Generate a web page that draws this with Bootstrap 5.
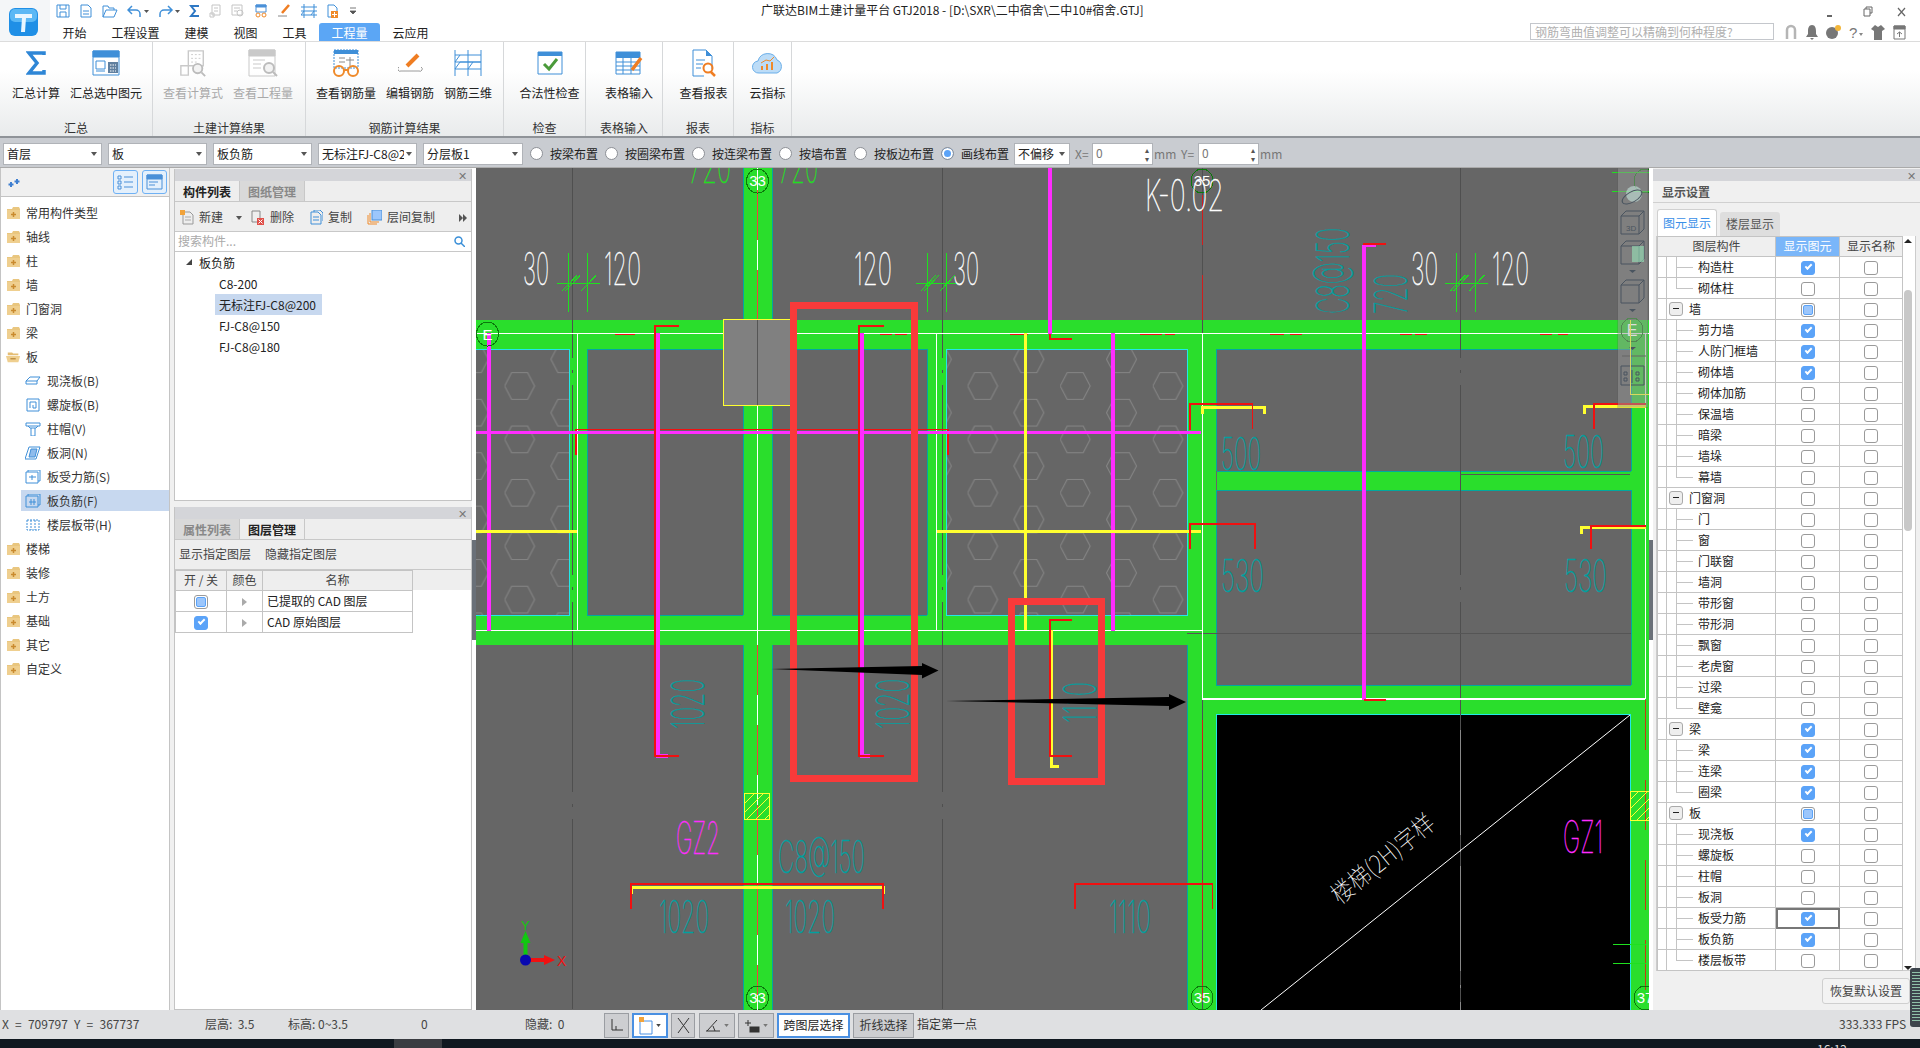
<!DOCTYPE html>
<html lang="zh-CN">
<head>
<meta charset="UTF-8" />
<title>广联达BIM土建计量平台 GTJ2018</title>
<link href="https://cdn.jsdelivr.net/npm/bootstrap@5.3.0/dist/css/bootstrap.min.css" rel="stylesheet" />
<style>
  html, body { height: 100%; overflow: hidden; }
  body { background: #f0f0f0; color: #222; font: 12px/1.2 "Noto Sans CJK SC", "Liberation Sans", sans-serif; }
  svg { display: block; }
  .app { width: 1920px; height: 1048px; position: relative; }

  /* title + tabs */
  .top-area { height: 42px; background: #fff; border-bottom: 1px solid #dcdcdc; }
  .logo-box { width: 50px; height: 41px; padding: 8px 0 0 9px; flex: none; background: #f4f6f8; }
  .qa-row { height: 23px; }
  .qa-icons { width: 711px; flex: none; padding: 0 0 2px 6px; gap: 9px; }
  .app-title { font-size: 12px; color: #222; padding-top: 3px; white-space: nowrap; }
  .win-btns { margin-left: auto; gap: 24px; padding: 1px 14px 0 0; color: #555; }
  .win-btns svg:first-child { margin-right: 5px; }
  .tab-row { height: 18px; }
  .rib-tab { padding: 0 12.5px; height: 18px; line-height: 19px; color: #222; white-space: nowrap; }
  .rib-tab.on { background: #5ba6f5; color: #fff; border-radius: 3px 3px 0 0; }
  .help-box { width: 244px; height: 17px; margin: 0 0 0 auto; padding: 0 4px; font-size: 12px; border: 1px solid #c4c7cc; border-radius: 0; color: #aaa; background: #fff; }
  .help-box::placeholder { color: #b0b0b0; }
  .top-tools { gap: 8px; width: 146px; flex: none; padding: 0 0 0 10px; }

  /* ribbon */
  .ribbon { height: 96px; background: linear-gradient(#fff 30%, #e9ebec); border-bottom: 2px solid #8f9398; }
  .rib-group { border-right: 1px solid #d6d8da; flex: none; padding: 1px 0 0 10px; position: relative; }
  .rib-btns { gap: 10px; }
  .rib-btn { display: flex; flex-direction: column; align-items: center; white-space: nowrap; color: #222; }
  .rib-btn .ico { height: 40px; display: flex; align-items: center; }
  .rib-btn span { margin-top: 3px; }
  .rib-btn.off { color: #a9a9a9; }
  .rib-name { position: absolute; left: 0; right: 0; bottom: 1px; text-align: center; color: #333; }

  /* placement bar */
  .place-bar { height: 30px; background: #c9ccd1; padding: 3px 0 0 3px; gap: 6px; white-space: nowrap; border-bottom: 1px solid #aaa; }
  .place-sel { height: 22px; padding: 0 12px 0 3px; font-size: 12px; line-height: 20px; color: #222; border: 1px solid #b0b3b8; border-radius: 0;
    background-image: url("data:image/svg+xml,%3Csvg xmlns='http://www.w3.org/2000/svg' viewBox='0 0 6 4'%3E%3Cpath d='M0 0h6L3 4z' fill='%23555'/%3E%3C/svg%3E");
    background-size: 6px 4px; background-position: right 4px center; }
  .radio-item { display: flex; align-items: center; gap: 7px; margin-left: 1px; }
  .radio-item .form-check-input { width: 13px; height: 13px; margin: 0; border: 1px solid #8d9096; background-color: #fff; flex: none; }
  .radio-item .form-check-input:checked { background-image: none; background-color: #5ba3f8; box-shadow: inset 0 0 0 2px #fff; }
  .offset-sel { width: 56px; margin-left: -1px; }
  .num-box { width: 61px; height: 22px; margin-left: -5px; background: #fff; border: 1px solid #b0b3b8; padding: 2px 3px; color: #777; position: relative; }
  .num-box::after { content: "▴\A▾"; white-space: pre; position: absolute; right: 3px; top: 1px; font-size: 8px; line-height: 9px; color: #555; }
  .muted-lb { color: #777; margin-left: -1px; width: 16px; }
  .unit-lb { color: #777; margin-left: -5px; width: 22px; }

  /* panels */
  .main-row { height: 842px; }
  .side-left { width: 170px; background: #fff; border-left: 1px solid #c4c4c4; border-right: 1px solid #c4c4c4; flex: none; }
  .side-head { height: 29px; background: #f0f0f0; border-bottom: 1px solid #c4c4c4; padding: 2px 2px 0 6px; }
  .view-btn { width: 25px; height: 24px; border: 1px solid #6fb1f4; border-radius: 3px; background: #e4f0fc; padding: 3px; margin-left: 4px; }
  .tree-list { border-radius: 0; padding-top: 4px; }
  .tree-list .list-group-item { height: 24px; padding: 0 0 0 5px; display: flex; align-items: center; gap: 5px; border: 0; background: transparent; color: #333; flex: none; }
  .tree-list .sub { padding-left: 24px; gap: 6px; }
  .tree-list .sub.on { background: linear-gradient(to right, transparent 20px, #c7d8ef 20px); background-size: 100% 21px; background-repeat: no-repeat; background-position: 0 1px; }
  .mid-col { width: 298px; margin-left: 4px; flex: none; padding-top: 1px; gap: 6px; }
  .mid-panel { background: #fff; border: 1px solid #c4c4c4; border-top: 0; }
  .pane-head { height: 12px; background: #d4d5d9; position: relative; flex: none; }
  .pane-x { position: absolute; right: 4px; top: 0; font-size: 11px; line-height: 12px; color: #777; }
  .pane-tabs { height: 21px; background: #eee; border-bottom: 1px solid #c8c8c8; flex: none; }
  .pane-tab { width: 65px; text-align: center; line-height: 21px; color: #888; background: #d9d9d9; font-weight: 700; border-right: 1px solid #c8c8c8; }
  .pane-tab.on { background: #eee; color: #222; }
  .pane-tools { height: 30px; background: #eee; border-bottom: 1px solid #c8c8c8; flex: none; padding: 2px 0 0 5px; color: #444; white-space: nowrap; }
  .pane-tools .tool { display: flex; align-items: center; gap: 5px; }
  .find-row { height: 20px; border-bottom: 1px solid #c8c8c8; padding: 0 6px 0 3px; flex: none; color: #aaa; justify-content: space-between; align-items: center; }
  .comp-row { height: 21px; line-height: 21px; padding-left: 44px; color: #222; }
  .comp-row.on { margin-left: 40px; padding-left: 4px; width: 107px; background: #c7d8ef; white-space: nowrap; }
  .comp-row.root { padding-left: 24px; position: relative; }
  .comp-row.root::before { content: ""; position: absolute; left: 11px; top: 7px; border-left: 6px solid transparent; border-bottom: 6px solid #444; }
  .layer-tools { height: 30px; background: #eee; border-bottom: 1px solid #c8c8c8; padding-left: 4px; gap: 14px; flex: none; align-items: center; color: #444; }
  .layer-tb { width: 238px; margin: 0; table-layout: fixed; border-color: #c4c4c4; font-size: 12px; }
  .layer-tb th, .layer-tb td { height: 21px; padding: 0; vertical-align: middle; text-align: center; font-weight: 400; background: transparent; color: #222; }
  .layer-tb th { height: 20px; color: #444; }
  .layer-tb td.nm { text-align: left; padding-left: 4px; }
  .layer-wrap { background: linear-gradient(#eee 20px, #fff 20px); }
  .tri { display: inline-block; border-left: 5px solid #aaa; border-top: 4px solid transparent; border-bottom: 4px solid transparent; }

  /* checks */
  .chk { display: inline-block; margin: 0; width: 14px; height: 14px; border: 1px solid #9a9a9a; border-radius: 3px; background: #fff; vertical-align: middle; position: relative; }
  .chk.yes { background: #5ba3f8; border-color: #5ba3f8; }
  .chk.yes::after { content: ""; position: absolute; left: 3px; top: 2px; width: 7px; height: 4px; border-left: 2px solid #fff; border-bottom: 2px solid #fff; transform: rotate(-45deg); }
  .chk.part::after { content: ""; position: absolute; inset: 1px; background: #9cc6fb; border: 1px solid #5ba3f8; border-radius: 2px; }

  /* canvas */
  .split-bar { width: 4px; flex: none; background: #fff; position: relative; }
  .split-bar::after { content: ""; position: absolute; left: 0; right: 0; top: 372px; height: 100px; background: #6a7078; }
  .cad-view { width: 1173px; height: 842px; background: #666; flex: none; overflow: hidden; position: relative; }
  .cad-txt { font-family: "Inter", "DejaVu Sans", sans-serif; font-weight: 100; stroke-width: .55; }
  .axis-no { font-family: "Liberation Sans", sans-serif; fill: #fff; font-size: 15px; text-anchor: middle; }

  /* right */
  .side-right { width: 267px; flex: none; background: #f0f0f0; position: relative; }
  .set-title { height: 22px; line-height: 22px; padding-left: 9px; color: #555; font-weight: 700; border-bottom: 1px solid #d0d0d0; flex: none; }
  .set-tabs { height: 33px; padding: 9px 0 0 4px; gap: 3px; flex: none; }
  .set-tab { width: 60px; text-align: center; line-height: 23px; height: 24px; background: #dedede; color: #555; border-radius: 3px 3px 0 0; }
  .set-tab.on { background: #fff; color: #3a8fe8; border: 1px solid #d0d0d0; border-bottom: 0; height: 27px; margin-top: -3px; line-height: 26px; }
  .set-box { margin-left: 3px; width: 260px; height: 735px; background: #fff; border: 1px solid #ccc; border-top: 0; position: relative; flex: none; }
  .set-tb { width: 245px; margin: 0; table-layout: fixed; border-color: #c4c4c4; font-size: 12px; }
  .set-tb th, .set-tb td { padding: 0; height: 21px; text-align: center; vertical-align: middle; font-weight: 400; color: #222; background: #fff; }
  .set-tb th { height: 20px; background: #efefef; color: #444; }
  .set-tb th.live { background: #7ab6f9; color: #fff; }
  .set-tb td.nm { text-align: left; position: relative; padding-left: 31px; white-space: nowrap; }
  .set-tb td.nm.grp { padding-left: 22px; }
  .set-tb td.nm.leaf::before { content: ""; position: absolute; left: 9px; top: -1px; bottom: -1px; border-left: 1px solid #c4c4c4; }
  .set-tb td.nm.leaf.end::before { bottom: 10px; }
  .set-tb td.nm.leaf::after { content: ""; position: absolute; left: 9px; top: 10px; width: 17px; border-top: 1px solid #c4c4c4; }
  .minus-box { position: absolute; left: 2px; top: 3px; width: 14px; height: 14px; border: 1px solid #aaa; border-radius: 3px; background: #eee; }
  .minus-box::after { content: ""; position: absolute; left: 3px; right: 3px; top: 5px; border-top: 1px solid #222; }
  .set-tb td.pick { outline: 2px solid #777; outline-offset: -2px; }
  .sbar { position: absolute; right: 3px; top: 54px; width: 8px; height: 241px; background: #c8c8c8; border-radius: 4px; }
  .sbar-up, .sbar-dn { position: absolute; right: 3px; border-left: 4px solid transparent; border-right: 4px solid transparent; }
  .sbar-up { top: 3px; border-bottom: 4px solid #222; }
  .sbar-dn { bottom: 0; border-top: 4px solid #222; }
  .reset-btn { margin: 7px 0 0 169px; width: 88px; height: 26px; padding: 0; font-size: 12px; color: #444; border: 1px solid #cfcfcf; border-radius: 3px; background: #f3f3f3; }

  /* status */
  .status-row { height: 29px; background: #dfe0e2; color: #444; white-space: nowrap; position: relative; flex: none; }
  .status-row .st { position: absolute; top: 7px; }
  .status-row .coord { word-spacing: 3.5px; }
  .st-btn { position: absolute; top: 3px; height: 25px; padding: 0; border: 1px solid #9a9da2; background: #cdced1; border-radius: 0; font-size: 12px; color: #333; display: flex; align-items: center; justify-content: center; gap: 3px; }
  .st-btn.on { background: #fff; border: 2px solid #4a90e2; }
  .task-row { height: 9px; background: #101820; position: relative; overflow: hidden; flex: none; }
  .task-cell { position: absolute; left: 394px; width: 48px; top: 0; bottom: 0; background: #3a3d42; }
  .task-time { position: absolute; left: 1817px; top: 3px; color: #ddd; font-size: 12px; }
  .vol-meter { position: absolute; left: 1910px; top: 968px; width: 12px; height: 59px; background-color: #3d444c; border-radius: 3px; }
  .vol-meter::after { content: ""; position: absolute; left: 2px; right: 2px; top: 4px; bottom: 4px; background: repeating-linear-gradient(#8fc0a8 0 1px, transparent 1px 3px); }
</style>
</head>
<body>
<svg width="0" height="0" style="position:absolute">
  <defs>
    <symbol id="folder" viewBox="0 0 15 14"><path d="M1 3h5l1-2h6l1 2v10H1z" fill="#e9c67f"/><path d="M1 4h13v9H1z" fill="#efcf8f"/><path d="M7.500 6v5M5 8.500h5" stroke="#c98a2e" stroke-width="1.500"/></symbol>
    <symbol id="folder-open" viewBox="0 0 17 14"><path d="M2 2h5l1 1h6v2H2z" fill="#e4bd74"/><path d="M0 6h16l-2 7H2z" fill="#efcf8f"/><path d="M5 9h6" stroke="#b98a3e" stroke-width="1.500"/></symbol>
    <symbol id="ghost-calc" viewBox="0 0 30 30"><path d="M10 2h16v16H10z M2 18h8v10H2z" fill="none" stroke="#c9c9c9" stroke-width="1.500"/><path d="M13 6h10M13 10h10M13 14h6" stroke="#c9c9c9" stroke-dasharray="2 2"/><circle cx="20" cy="21" r="5" fill="#f3f3f3" stroke="#bcbcbc" stroke-width="2"/><path d="M24 25l4 4" stroke="#bcbcbc" stroke-width="2"/></symbol>
    <pattern id="hex" patternUnits="userSpaceOnUse" x="504.600" y="359.300" width="92.600" height="53.400">
      <path d="M0 26.700l7-13.350h16l7 13.350-7 13.350H7z M46.300 0l7-13.350h16l7 13.350-7 13.350h-16z M46.300 53.400l7-13.350h16l7 13.350-7 13.350h-16z" fill="none" stroke="#868686"/>
    </pattern>
    <pattern id="hatch" patternUnits="userSpaceOnUse" width="9" height="9"><path d="M-1 10L10 -1" stroke="#ffff30"/></pattern>
    <g id="tick3"><path d="M0 -30v59M19 -30v59M-11 0h43M-6 8L9 -8M13 8L28 -8M-3 8L12 -8" stroke="#1fe01f" fill="none"/></g>
  </defs>
</svg>

<div class="app d-flex flex-column">
  <!-- title and tabs -->
  <div class="top-area d-flex flex-none">
    <div class="logo-box">
      <svg width="29" height="28" viewBox="0 0 29 28"><rect width="29" height="28" rx="6" fill="#1f8fe6"/><rect x="1" y="1" width="27" height="13" rx="5" fill="#5bb8f5"/><path d="M6 6h17v4h-6l-1 14h-4l1-14H6z" fill="#e8f6ff"/></svg>
    </div>
    <div class="flex-grow-1 d-flex flex-column">
      <div class="qa-row d-flex">
        <div class="qa-icons d-flex align-items-center">
          <svg width="14" height="14" viewBox="0 0 14 14" fill="none" stroke="#3f8fd8"><path d="M1 1h12v12H1zM4 1v4h6V1M4 13V8h6v5"/></svg>
          <svg width="14" height="14" viewBox="0 0 14 14" fill="none" stroke="#3f8fd8"><path d="M2 1h7l3 3v9H2zM4 7h6M4 10h6"/></svg>
          <svg width="16" height="14" viewBox="0 0 16 14" fill="none" stroke="#3f8fd8"><path d="M1 13V2h5l1 2h5v2M1 13l3-7h11l-3 7z"/></svg>
          <svg width="22" height="14" viewBox="0 0 22 14" fill="none" stroke="#3f8fd8" stroke-width="1.500"><path d="M5 2L1 6l4 4M1 6h8a4 4 0 0 1 4 4v3"/><path d="M17 6h5l-2.500 3z" fill="#555" stroke="none"/></svg>
          <svg width="22" height="14" viewBox="0 0 22 14" fill="none" stroke="#3f8fd8" stroke-width="1.500"><path d="M10 2l4 4-4 4M14 6H6a4 4 0 0 0-4 4v3"/><path d="M17 6h5l-2.500 3z" fill="#555" stroke="none"/></svg>
          <svg width="11" height="14" viewBox="0 0 11 14" fill="none" stroke="#2e78c4" stroke-width="2"><path d="M10 2H2l4 5-4 5h8"/></svg>
          <svg width="13" height="14" viewBox="0 0 13 14" fill="none" stroke="#c4c4c4"><path d="M3 1h8v10H3zM1 9h4v4H1zM5 4h4M5 7h4"/></svg>
          <svg width="14" height="14" viewBox="0 0 14 14" fill="none" stroke="#c4c4c4"><path d="M1 1h10v10H1zM3 4h6M3 7h3"/><circle cx="9" cy="9" r="3"/></svg>
          <svg width="14" height="14" viewBox="0 0 14 14" fill="none" stroke="#4a90d8"><path d="M2 1h10v7H2z"/><path d="M2 1h10v2H2z" fill="#4a90d8"/><circle cx="4" cy="11" r="2" stroke="#ef8a2a"/><circle cx="10" cy="11" r="2" stroke="#ef8a2a"/></svg>
          <svg width="15" height="14" viewBox="0 0 15 14" fill="none"><path d="M1 12h9" stroke="#888"/><path d="M5 9l7-8" stroke="#ef7d22" stroke-width="2.500"/></svg>
          <svg width="16" height="14" viewBox="0 0 16 14" fill="none" stroke="#3f8fd8"><path d="M3 0v14M13 0v14M0 3h16M0 7h16M0 11h16M3 7l-3 4M13 7l-3 4"/></svg>
          <svg width="15" height="14" viewBox="0 0 15 14" fill="none" stroke="#3f8fd8"><path d="M2 1h6l3 3v9H2z"/><rect x="5" y="7" width="7" height="7" fill="#ef8a2a" stroke="none"/><path d="M8.500 8v5M6 10.500h5" stroke="#fff"/></svg>
          <svg width="6" height="8" viewBox="0 0 6 8"><path d="M0 1h6M0 4h6l-3 3z" stroke="#555" fill="#555" stroke-width=".8"/></svg>
        </div>
        <div class="app-title">广联达BIM土建计量平台 GTJ2018 - [D:\SXR\二中宿舍\二中10#宿舍.GTJ]</div>
        <div class="win-btns d-flex align-items-center">
          <svg width="8" height="12" viewBox="0 0 8 12"><path d="M1 9h5v2H1z" fill="#666"/></svg>
          <svg width="10" height="12" viewBox="0 0 10 12" fill="none" stroke="#666"><path d="M3 3V1h6v6H7M1 3h6v7H1z"/></svg>
          <svg width="9" height="12" viewBox="0 0 9 12" fill="none" stroke="#666" stroke-width="1.200"><path d="M1 2l7 8M8 2l-7 8"/></svg>
        </div>
      </div>
      <div class="tab-row d-flex">
        <div class="rib-tab">开始</div>
        <div class="rib-tab">工程设置</div>
        <div class="rib-tab">建模</div>
        <div class="rib-tab">视图</div>
        <div class="rib-tab">工具</div>
        <div class="rib-tab on">工程量</div>
        <div class="rib-tab">云应用</div>
        <input class="form-control help-box" placeholder="钢筋弯曲值调整可以精确到何种程度?">
        <div class="top-tools d-flex align-items-center">
          <svg width="14" height="16" viewBox="0 0 14 16" fill="none" stroke="#b5b5b5" stroke-width="2.500"><path d="M3 15V6a4 4 0 0 1 8 0v9"/></svg>
          <svg width="12" height="15" viewBox="0 0 12 15"><path d="M6 0c3 0 4 3 4 6v3l2 3H0l2-3V6c0-3 1-6 4-6zM4 13h4l-2 2z" fill="#777"/></svg>
          <svg width="15" height="15" viewBox="0 0 15 15"><circle cx="6" cy="8" r="6" fill="#777"/><circle cx="12" cy="3" r="3" fill="#f3b63a"/></svg>
          <svg width="14" height="15" viewBox="0 0 14 15" fill="none"><text x="0" y="13" font-size="15" fill="#777" stroke="none" font-family="Liberation Sans">?</text><path d="M10 8h4l-2 3z" fill="#888"/></svg>
          <svg width="14" height="15" viewBox="0 0 14 15"><path d="M4 0l3 2 3-2 4 4-3 2v9H3V6L0 4z" fill="#777"/></svg>
          <svg width="13" height="15" viewBox="0 0 13 15" fill="none" stroke="#777"><path d="M1 1h11v13H1z"/><path d="M1 1h11v3H1z" fill="#777"/><path d="M6.500 12V7M4 9l2.500-2L9 9"/></svg>
        </div>
      </div>
    </div>
  </div>

  <!-- ribbon -->
  <div class="ribbon d-flex flex-none">
    <div class="rib-group" style="width:153px">
      <div class="rib-btns d-flex">
        <div class="rib-btn" style="margin-left:2px"><div class="ico"><svg width="20" height="24" viewBox="0 0 20 24" fill="none" stroke="#2e86d6" stroke-width="3.500"><path d="M18 4V2H3l8 10-8 10h15v-3"/></svg></div><span>汇总计算</span></div>
        <div class="rib-btn"><div class="ico"><svg width="28" height="26" viewBox="0 0 28 26" fill="none" stroke="#3f8fd8"><path d="M1 1h26v24H1z"/><path d="M1 1h26v6H1z" fill="#3f8fd8"/><path d="M4 11h9v8H4zM4 21h9"/><rect x="16" y="12" width="10" height="11" fill="#5f7f9f" stroke="none"/><path d="M18 15h6M18 18h6M18 21h6" stroke="#fff" stroke-dasharray="1.500 1"/></svg></div><span>汇总选中图元</span></div>
      </div>
      <div class="rib-name">汇总</div>
    </div>
    <div class="rib-group" style="width:153px">
      <div class="rib-btns d-flex">
        <div class="rib-btn off"><div class="ico"><svg width="28" height="28"><use href="#ghost-calc"/></svg></div><span>查看计算式</span></div>
        <div class="rib-btn off"><div class="ico"><svg width="30" height="28" viewBox="0 0 30 28" fill="none" stroke="#c9c9c9"><path d="M1 1h26v26H1z"/><path d="M1 1h26v6H1z" fill="#c9c9c9"/><path d="M5 11h12M5 15h8M5 19h8"/><circle cx="21" cy="19" r="5" fill="#f3f3f3" stroke="#bcbcbc" stroke-width="2"/><path d="M25 23l4 4" stroke="#bcbcbc" stroke-width="2"/></svg></div><span>查看工程量</span></div>
      </div>
      <div class="rib-name">土建计算结果</div>
    </div>
    <div class="rib-group" style="width:198px">
      <div class="rib-btns d-flex">
        <div class="rib-btn"><div class="ico"><svg width="30" height="28" viewBox="0 0 30 28" fill="none"><path d="M3 1h24v18H3z" stroke="#3f8fd8" stroke-dasharray="2 1"/><path d="M3 1h24v4H3z" fill="#3f8fd8"/><path d="M8 9h6M8 13h6M19 8v9M15 11h8" stroke="#8a8a8a"/><circle cx="8" cy="22" r="5" stroke="#ef8a2a" stroke-width="2"/><circle cx="22" cy="22" r="5" stroke="#ef8a2a" stroke-width="2"/><path d="M13 21h4" stroke="#ef8a2a" stroke-width="2"/></svg></div><span>查看钢筋量</span></div>
        <div class="rib-btn"><div class="ico"><svg width="25" height="20" viewBox="0 0 25 20" fill="none"><path d="M1 14a2 2 0 0 0 2 4h18a2 2 0 0 0 2-4" stroke="#9a9a9a"/><path d="M9 13L20 2" stroke="#ef7d22" stroke-width="4"/></svg></div><span>编辑钢筋</span></div>
        <div class="rib-btn"><div class="ico"><svg width="28" height="26" viewBox="0 0 28 26" fill="none" stroke="#3f8fd8"><path d="M1 0v26M14 0v26M27 0v26M1 5h26M1 12h26M1 19h26M1 19l5-7h21M1 12l5-7M14 19l5-7"/></svg></div><span>钢筋三维</span></div>
      </div>
      <div class="rib-name">钢筋计算结果</div>
    </div>
    <div class="rib-group" style="width:82px">
      <div class="rib-btn"><div class="ico"><svg width="26" height="24" viewBox="0 0 26 24" fill="none"><path d="M1 1h24v22H1z" stroke="#3f8fd8"/><path d="M1 1h24v4H1z" fill="#3f8fd8"/><path d="M7 13l5 5 8-10" stroke="#4a9a3a" stroke-width="3"/></svg></div><span>合法性检查</span></div>
      <div class="rib-name">检查</div>
    </div>
    <div class="rib-group" style="width:77px">
      <div class="rib-btn"><div class="ico"><svg width="29" height="24" viewBox="0 0 29 24" fill="none"><path d="M1 1h24v22H1z" stroke="#3f8fd8"/><path d="M1 1h24v6H1z" fill="#3f8fd8"/><path d="M1 11h24M1 15h24M1 19h24M8 7v16M16 7v16" stroke="#3f8fd8"/><path d="M17 19L26 7" stroke="#ef7d22" stroke-width="3.500"/></svg></div><span>表格输入</span></div>
      <div class="rib-name">表格输入</div>
    </div>
    <div class="rib-group" style="width:71px">
      <div class="rib-btn" style="margin-left:1px"><div class="ico"><svg width="24" height="28" viewBox="0 0 24 28" fill="none"><path d="M1 1h13l6 6v13M1 1v26h11" stroke="#3f8fd8"/><path d="M14 1l6 6h-6z" fill="#3f8fd8"/><path d="M4 11h9M4 15h7M4 19h5" stroke="#3f8fd8"/><circle cx="16" cy="19" r="4.500" stroke="#ef7d22" stroke-width="2"/><path d="M19 23l4 4" stroke="#ef7d22" stroke-width="2.500"/></svg></div><span>查看报表</span></div>
      <div class="rib-name">报表</div>
    </div>
    <div class="rib-group" style="width:58px">
      <div class="rib-btn"><div class="ico"><svg width="32" height="22" viewBox="0 0 32 22"><path d="M7 21a6 6 0 0 1-1-12 10 10 0 0 1 19-1 7 7 0 0 1 0 13z" fill="#bcdcf7" stroke="#6aaee8"/><path d="M10 18v-4M15 18v-6M20 18v-8" stroke="#ef8a2a" stroke-width="2"/><path d="M9 11l5-3 4 1 4-4" fill="none" stroke="#ef8a2a"/></svg></div><span>云指标</span></div>
      <div class="rib-name">指标</div>
    </div>
  </div>

  <!-- placement bar -->
  <div class="place-bar d-flex align-items-center flex-none">
    <select class="form-select place-sel" style="width:99px"><option>首层</option></select>
    <select class="form-select place-sel" style="width:99px"><option>板</option></select>
    <select class="form-select place-sel" style="width:99px"><option>板负筋</option></select>
    <select class="form-select place-sel" style="width:99px"><option>无标注FJ-C8@200</option></select>
    <select class="form-select place-sel" style="width:100px"><option>分层板1</option></select>
    <label class="radio-item"><input class="form-check-input" type="radio" name="mode">按梁布置</label>
    <label class="radio-item"><input class="form-check-input" type="radio" name="mode">按圈梁布置</label>
    <label class="radio-item"><input class="form-check-input" type="radio" name="mode">按连梁布置</label>
    <label class="radio-item"><input class="form-check-input" type="radio" name="mode">按墙布置</label>
    <label class="radio-item"><input class="form-check-input" type="radio" name="mode">按板边布置</label>
    <label class="radio-item"><input class="form-check-input" type="radio" name="mode" checked>画线布置</label>
    <select class="form-select place-sel offset-sel"><option>不偏移</option></select>
    <span class="muted-lb">X=</span>
    <div class="num-box">0</div>
    <span class="unit-lb">mm</span>
    <span class="muted-lb">Y=</span>
    <div class="num-box">0</div>
    <span class="unit-lb">mm</span>
  </div>

  <!-- main -->
  <div class="main-row d-flex flex-none">
    <div class="side-left d-flex flex-column">
      <div class="side-head d-flex align-items-start flex-none">
        <svg class="mt-2" width="13" height="10" viewBox="0 0 13 10"><path d="M4 4v5M1.500 6.500h5M10 1v5M7.500 3.500h5" stroke="#3f7fd0" stroke-width="2"/></svg>
        <div class="view-btn ms-auto"><svg width="17" height="16" viewBox="0 0 17 16" fill="none" stroke="#4a90d8"><path d="M1 2h3v3H1zM1 7h3v3H1zM1 12h3v3H1zM7 3h9M7 8h9M7 13h9"/></svg></div>
        <div class="view-btn"><svg width="17" height="16" viewBox="0 0 17 16" fill="none" stroke="#4a90d8"><path d="M1 1h15v14H1z"/><path d="M1 1h15v4H1z" fill="#4a90d8"/><path d="M3 8h9M3 11h6"/></svg></div>
      </div>
      <div class="list-group list-group-flush tree-list">
        <div class="list-group-item"><svg width="15" height="14"><use href="#folder"/></svg>常用构件类型</div>
        <div class="list-group-item"><svg width="15" height="14"><use href="#folder"/></svg>轴线</div>
        <div class="list-group-item"><svg width="15" height="14"><use href="#folder"/></svg>柱</div>
        <div class="list-group-item"><svg width="15" height="14"><use href="#folder"/></svg>墙</div>
        <div class="list-group-item"><svg width="15" height="14"><use href="#folder"/></svg>门窗洞</div>
        <div class="list-group-item"><svg width="15" height="14"><use href="#folder"/></svg>梁</div>
        <div class="list-group-item"><svg width="15" height="14"><use href="#folder-open"/></svg>板</div>
        <div class="list-group-item sub"><svg width="16" height="14" viewBox="0 0 16 14" fill="none" stroke="#3f8fd8"><path d="M1 7l4-4h10l-3 4v3H1zM1 7h11"/></svg>现浇板(B)</div>
        <div class="list-group-item sub"><svg width="16" height="14" viewBox="0 0 16 14" fill="none" stroke="#3f8fd8"><path d="M2 1h12v12H2zM5 10V4h6v6H8V7"/></svg>螺旋板(B)</div>
        <div class="list-group-item sub"><svg width="16" height="14" viewBox="0 0 16 14" fill="none" stroke="#3f8fd8"><path d="M1 1h14v3H1zM3 4l2 2h6l2-2M6 6v8h4V6"/></svg>柱帽(V)</div>
        <div class="list-group-item sub"><svg width="16" height="14" viewBox="0 0 16 14" fill="none" stroke="#3f8fd8"><path d="M4 1h11l-4 12H0z"/><path d="M6 3h6l-2 8H4z" fill="#8fbcec"/></svg>板洞(N)</div>
        <div class="list-group-item sub"><svg width="16" height="14" viewBox="0 0 16 14" fill="none" stroke="#3f8fd8"><path d="M1 2h12v11H1zM3 2V0h12v11h-2M4 7h7M7 5v5"/></svg>板受力筋(S)</div>
        <div class="list-group-item sub on"><svg width="16" height="14" viewBox="0 0 16 14" fill="none" stroke="#3f8fd8"><path d="M1 2h12v11H1zM3 2V0h12v11h-2M4 8h7M6 5v6M9 5v6"/></svg>板负筋(F)</div>
        <div class="list-group-item sub"><svg width="16" height="14" viewBox="0 0 16 14" fill="none" stroke="#3f8fd8"><path d="M2 2h12v10H2zM6 2v10M10 2v10" stroke-dasharray="2 1"/></svg>楼层板带(H)</div>
        <div class="list-group-item"><svg width="15" height="14"><use href="#folder"/></svg>楼梯</div>
        <div class="list-group-item"><svg width="15" height="14"><use href="#folder"/></svg>装修</div>
        <div class="list-group-item"><svg width="15" height="14"><use href="#folder"/></svg>土方</div>
        <div class="list-group-item"><svg width="15" height="14"><use href="#folder"/></svg>基础</div>
        <div class="list-group-item"><svg width="15" height="14"><use href="#folder"/></svg>其它</div>
        <div class="list-group-item"><svg width="15" height="14"><use href="#folder"/></svg>自定义</div>
      </div>
    </div>

    <div class="mid-col d-flex flex-column">
      <div class="mid-panel d-flex flex-column" style="height:332px">
        <div class="pane-head"><span class="pane-x">✕</span></div>
        <div class="pane-tabs d-flex"><div class="pane-tab on">构件列表</div><div class="pane-tab">图纸管理</div></div>
        <div class="pane-tools d-flex align-items-center">
          <div class="tool"><svg width="14" height="15" viewBox="0 0 14 15" fill="none"><path d="M3 2h7l3 3v9H3z" stroke="#999"/><path d="M5 7h6M5 10h6" stroke="#aaa"/><path d="M0 0h5v5H0z" fill="#f2a33a"/></svg>新建<svg class="ms-2" width="6" height="4" viewBox="0 0 6 4"><path d="M0 0h6L3 4z" fill="#555"/></svg></div>
          <div class="tool" style="margin-left:9px"><svg width="14" height="15" viewBox="0 0 14 15" fill="none"><path d="M1 1h8v11H1z" stroke="#888"/><rect x="6" y="8" width="7" height="7" fill="#e0504a"/><path d="M7.500 9.500l4 4M11.500 9.500l-4 4" stroke="#fff"/></svg>删除</div>
          <div class="tool" style="margin-left:16px"><svg width="13" height="15" viewBox="0 0 13 15" fill="none" stroke="#3f8fd8"><path d="M1 2h7l3 3v9H1zM3 7h6M3 10h6"/><path d="M4 2V0h6l3 3v8"/></svg>复制</div>
          <div class="tool" style="margin-left:15px"><svg width="15" height="15" viewBox="0 0 15 15" fill="none"><path d="M1 5v9h9" stroke="#ef8a2a"/><path d="M3 3v9h9" stroke="#ef8a2a"/><rect x="5" y="0" width="10" height="10" fill="#9cc6fb" stroke="#4a90d8"/></svg>层间复制</div>
          <svg class="ms-auto me-1" width="8" height="8" viewBox="0 0 8 8"><path d="M0 0l4 4-4 4zM4 0l4 4-4 4z" fill="#555"/></svg>
        </div>
        <div class="find-row d-flex"><span>搜索构件...</span><svg width="11" height="11" viewBox="0 0 11 11" fill="none" stroke="#3a8fd8" stroke-width="1.500"><circle cx="4.500" cy="4.500" r="3.500"/><path d="M7 7l4 4"/></svg></div>
        <div class="comp-row root">板负筋</div>
        <div class="comp-row">C8-200</div>
        <div class="comp-row on">无标注FJ-C8@200</div>
        <div class="comp-row">FJ-C8@150</div>
        <div class="comp-row">FJ-C8@180</div>
      </div>
      <div class="mid-panel d-flex flex-column flex-grow-1">
        <div class="pane-head"><span class="pane-x">✕</span></div>
        <div class="pane-tabs d-flex"><div class="pane-tab">属性列表</div><div class="pane-tab on">图层管理</div></div>
        <div class="layer-tools d-flex"><span>显示指定图层</span><span>隐藏指定图层</span></div>
        <div class="layer-wrap">
          <table class="table table-bordered layer-tb">
            <colgroup><col style="width:51px"><col style="width:36px"><col></colgroup>
            <thead><tr><th>开 / 关</th><th>颜色</th><th>名称</th></tr></thead>
            <tbody>
              <tr><td><span class="chk part"></span></td><td><span class="tri"></span></td><td class="nm">已提取的 CAD 图层</td></tr>
              <tr><td><span class="chk yes"></span></td><td><span class="tri"></span></td><td class="nm">CAD 原始图层</td></tr>
            </tbody>
          </table>
        </div>
      </div>
    </div>

    <div class="split-bar"></div>

    <!-- drawing -->
    <div class="cad-view">
      <svg width="1173" height="842" viewBox="476 168 1173 842" shape-rendering="crispEdges">
        <!-- walls -->
        <g fill="#2ade2c">
          <rect x="476" y="320" width="1174" height="29"/>
          <rect x="476" y="615" width="711" height="30"/>
          <rect x="743" y="168" width="29" height="842"/>
          <rect x="1187" y="320" width="29" height="690"/>
          <rect x="569" y="349" width="18" height="266"/>
          <rect x="927" y="349" width="19" height="266"/>
          <rect x="1216" y="685" width="415" height="30"/>
          <rect x="1217" y="471" width="414" height="19"/>
          <rect x="1631" y="320" width="19" height="690"/>
        </g>
        <path d="M743 168v152M772 168v152M743 349v266M772 349v266M743 645v365M772 645v365M1187 645v365M1216 349v122M1216 490v195M1631 349v122M1631 490v195M587 349v266M927 349v266M587 349h156M772 349h155M587 615h156M772 615h155M1216 349h415M1216 490h415M1216 685h415M1217 471h414" stroke="#00a8a0" fill="none"/>

        <!-- hatched rooms -->
        <rect x="476" y="349" width="93" height="266" fill="url(#hex)"/>
        <rect x="946" y="349" width="241" height="266" fill="url(#hex)"/>
        <path d="M476 349h93v266h-93M946 349h241v266H946z" fill="none" stroke="#22e8e8"/>
        <rect x="1216.500" y="714.500" width="414" height="296" fill="#000" stroke="#22e8e8"/>

        <!-- gray axis lines -->
        <path d="M572.500 168v842M942.500 168v842M1202 168v842M1460.500 168v842" stroke="#4f4f4f" stroke-dasharray="190 12 3 12" fill="none"/>
        <path d="M1202 645v365M1202 168v152" stroke="#505050" fill="none"/>
        <path d="M1460.500 730v280" stroke="#888" stroke-dasharray="105 14 3 14" fill="none"/>
        <path d="M1187 633h444M1460 474h170" stroke="#555" fill="none"/>

        <!-- white center lines -->
        <path d="M615 334.500h18M625 334.500h10M880 334.500h12M895 334.500h12M1010 334.500h18M1140 334.500h22M1165 334.500h10M1270 334.500h14M1290 334.500h12M1400 334.500h12M1415 334.500h12M1540 334.500h12M1558 334.500h10" stroke="#f01010" fill="none"/>
        <g stroke="#fff" fill="none">
          <path d="M476 333h1174M476 630.500h726M757.500 168v842M1645 333v366"/>
          <path d="M577.500 333v297M936.500 333v297M1202.500 333v366M1202 699h443" stroke-width="1.500"/>
        </g>
        <path d="M757.500 190v130M757.500 645v350M1202.500 195v125M1202.500 720v280M1645 700v300" stroke="#f01010" stroke-dasharray="50 30" fill="none" opacity=".8"/>

        <!-- gray column -->
        <rect x="723.500" y="319.500" width="70" height="86" fill="#808080" stroke="#ffff30"/>
        <path d="M757.500 320v85" stroke="#555"/>

        <!-- rebars -->
        <g fill="none" stroke="#f01010" stroke-width="1.200">
          <path d="M576 455v-25.500h372v25.500"/>
        </g>
        <g fill="none" stroke="#ff2cff" stroke-width="3.500">
          <path d="M489 333v298"/>
          <path d="M658 333v423h10"/>
          <path d="M862 333v423h8"/>
          <path d="M1113 333v298"/>
          <path d="M1050 168v166"/>
          <path d="M1364 245v455"/>
          <path d="M1364 245h12"/>
          <path d="M476 432.500h725"/>
        </g>
        <g fill="none" stroke="#ffff30" stroke-width="3">
          <path d="M476 531.500h101M937 531.500h264"/>
          <path d="M1025 333v297"/>
          <path d="M1051 630v136h8"/>
          <path d="M1202 414v-7h62v7"/>
          <path d="M1584 414v-8h62"/>
          <path d="M1581 534v-7h65"/>
          <path d="M631 894v-6.500h252v6.500"/>
        </g>
        <g fill="none" stroke="#f01010" stroke-width="1.200">
          <path d="M679 326h-24v430h24"/>
          <path d="M884 326h-25v430h25"/>
          <path d="M1072 620h-22v136h22"/>
          <path d="M1050 334v5h22"/>
          <path d="M1364 245v-1h22"/>
          <path d="M1364 700h22"/>
          <path d="M1190 430v-26h62.500v25"/>
          <path d="M1190 549v-25h65v25"/>
          <path d="M1594 429v-25h52"/>
          <path d="M1591 549v-23h55"/>
          <path d="M631 909v-25h252v25"/>
          <path d="M1075 909v-25h137.500v25"/>
        </g>

        <!-- axis bubbles -->
        <g fill="none" stroke="#0c780c">
          <ellipse cx="757.500" cy="181" rx="11" ry="12"/><ellipse cx="757.500" cy="998" rx="11" ry="12"/>
          <ellipse cx="1202" cy="181" rx="11" ry="12"/><ellipse cx="1202" cy="998" rx="11" ry="12"/>
          <ellipse cx="1645" cy="998" rx="11" ry="12"/><ellipse cx="487.500" cy="334" rx="11" ry="12"/>
          <ellipse cx="1645" cy="181" rx="11" ry="12"/><ellipse cx="1632" cy="330" rx="11" ry="12"/>
        </g>
        <text class="axis-no" x="757.500" y="186">33</text><text class="axis-no" x="757.500" y="1003">33</text>
        <text class="axis-no" x="1202" y="186">35</text><text class="axis-no" x="1202" y="1003">35</text>
        <text class="axis-no" x="1645" y="1003">37</text><text class="axis-no" x="487.500" y="340">E</text>

        <!-- dimension ticks -->
        <use href="#tick3" x="568.300" y="283"/><use href="#tick3" x="927" y="283"/><use href="#tick3" x="1456.400" y="283"/>
        <path d="M1612 172h38M1612 191h38M1612.500 944h33M1612.500 963h33" stroke="#1fe01f" fill="none"/>

        <!-- cad text -->
        <g class="cad-txt" font-size="45" fill="#fff" stroke="#fff">
          <text x="523" y="285" textLength="26" lengthAdjust="spacingAndGlyphs">30</text>
          <text x="604" y="285" textLength="37" lengthAdjust="spacingAndGlyphs">120</text>
          <text x="854" y="285" textLength="38" lengthAdjust="spacingAndGlyphs">120</text>
          <text x="953" y="285" textLength="26" lengthAdjust="spacingAndGlyphs">30</text>
          <text x="1411" y="285" textLength="27" lengthAdjust="spacingAndGlyphs">30</text>
          <text x="1492" y="285" textLength="37" lengthAdjust="spacingAndGlyphs">120</text>
          <text x="1145" y="211" font-size="43" textLength="79" lengthAdjust="spacingAndGlyphs">K-0.02</text>
        </g>
        <g class="cad-txt" font-size="45" fill="#1fe01f" stroke="#1fe01f">
          <text x="689" y="183" textLength="42" lengthAdjust="spacingAndGlyphs">720</text>
          <text x="779" y="183" textLength="39" lengthAdjust="spacingAndGlyphs">720</text>
        </g>
        <g class="cad-txt" font-size="45" fill="#00a0a0" stroke="#00a0a0">
          <text x="659" y="933" textLength="50" lengthAdjust="spacingAndGlyphs">1020</text>
          <text x="785" y="933" textLength="50" lengthAdjust="spacingAndGlyphs">1020</text>
          <text x="1109" y="933" textLength="42" lengthAdjust="spacingAndGlyphs">1110</text>
          <text x="778" y="873" textLength="87" lengthAdjust="spacingAndGlyphs">C8@150</text>
          <text x="1221" y="470" textLength="40" lengthAdjust="spacingAndGlyphs">500</text>
          <text x="1563" y="468" textLength="41" lengthAdjust="spacingAndGlyphs">500</text>
          <text x="1221" y="592" textLength="43" lengthAdjust="spacingAndGlyphs">530</text>
          <text x="1564" y="592" textLength="43" lengthAdjust="spacingAndGlyphs">530</text>
          <text transform="translate(704 729) rotate(-90)" textLength="50" lengthAdjust="spacingAndGlyphs">1020</text>
          <text transform="translate(908.500 729) rotate(-90)" textLength="50" lengthAdjust="spacingAndGlyphs">1020</text>
          <text transform="translate(1096 723) rotate(-90)" textLength="41" lengthAdjust="spacingAndGlyphs">1110</text>
          <text transform="translate(1349 314) rotate(-90)" textLength="86" lengthAdjust="spacingAndGlyphs">C8@150</text>
          <text transform="translate(1407 314) rotate(-90)" textLength="40" lengthAdjust="spacingAndGlyphs">720</text>
        </g>
        <g class="cad-txt" font-size="45" fill="#ff2cff" stroke="#ff2cff">
          <text x="676" y="854" textLength="44" lengthAdjust="spacingAndGlyphs">GZ2</text>
          <text x="1563" y="853" textLength="40" lengthAdjust="spacingAndGlyphs">GZ1</text>
        </g>
        <text transform="translate(1340 905) rotate(-39)" font-size="25" fill="#fff" font-weight="100" font-family="Noto Sans CJK SC, sans-serif" textLength="125" lengthAdjust="spacingAndGlyphs">楼梯(2H)字样</text>
        <path d="M1630 715L1261 1010" stroke="#fff" fill="none" shape-rendering="auto"/>

        <!-- hatch markers -->
        <rect x="744.500" y="793.500" width="25" height="26" fill="url(#hatch)" stroke="#ffff30"/>
        <rect x="1630.500" y="791.500" width="19" height="29" fill="url(#hatch)" stroke="#ffff30"/>

        <!-- annotation marks -->
        <path d="M793.500 305.500h121v472.500h-121z" fill="none" stroke="#f93a3a" stroke-width="7"/>
        <path d="M1011.500 601.500h89.500v180h-89.500z" fill="none" stroke="#f93a3a" stroke-width="7"/>
        <g fill="#000" shape-rendering="auto">
          <path d="M771 669l151-3v-3l16.500 7.500-16.500 8v-3.500z"/>
          <path d="M946 701l223-4v-3l17 8-17 8v-4z"/>
        </g>

        <!-- axes gizmo -->
        <g shape-rendering="auto">
          <path d="M525.500 960v-20" stroke="#10c810" stroke-width="4"/><path d="M525.500 931l5 12h-10z" fill="#10c810"/>
          <path d="M525 960h20" stroke="#f01010" stroke-width="4"/><path d="M555 960l-11 5v-10z" fill="#f01010"/>
          <circle cx="525.500" cy="960" r="5.500" fill="#0808b0"/>
          <text x="521" y="930" font-size="13" fill="#10c810" font-family="Liberation Sans">Y</text>
          <text x="557" y="966" font-size="14" fill="#f01010" font-family="Liberation Sans">X</text>
        </g>

        <!-- floating view tools -->
        <rect x="1617.500" y="168" width="30" height="239" fill="rgb(150,150,150)" fill-opacity=".52" stroke="#555" stroke-opacity=".2"/>
        <g fill="none" stroke="#4a5560" shape-rendering="auto">
          <circle cx="1634" cy="194" r="8" fill="#c4e4dc" fill-opacity=".6" stroke="none"/><ellipse cx="1632" cy="197" rx="11" ry="5" transform="rotate(-30 1632 197)"/>
          <path d="M1621 216h18v18h-18zM1621 216l5-5h18v18l-5 5M1639 216l5-5"/>
          <text x="1626" y="231" font-size="8" fill="#4a5560" stroke="none" font-family="Liberation Sans">3D</text>
          <path d="M1621 246h18v18h-18zM1621 246l5-5h18v18l-5 5M1639 246l5-5"/><rect x="1632" y="246" width="12" height="16" fill="#9aeec0" fill-opacity=".55" stroke="none"/>
          <path d="M1629 270h7l-3.500 3z" fill="#4a5560" stroke="none"/>
          <path d="M1621 285h18v18h-18zM1621 285l5-5h18v18l-5 5M1639 285l5-5"/>
          <path d="M1629 309h7l-3.500 3z" fill="#4a5560" stroke="none"/>
          <path d="M1629 347h7l-3.500 3z" fill="#4a5560" stroke="none"/>
          <path d="M1622 356h24" stroke="#666"/>
          <path d="M1621 366h23v19h-23zM1632 370v13M1624 372h3v3h-3zM1624 378h3v3h-3zM1636 372h3v3h-3zM1636 378h3v3h-3z"/>
        </g>
        <text x="1632" y="336" font-size="16" fill="#ddd" text-anchor="middle" font-family="Liberation Sans">E</text>
        <path d="M1630.500 320v74h19" fill="none" stroke="#d8d860"/>
      </svg>
    </div>

    <div class="split-bar"></div>

    <!-- display settings -->
    <div class="side-right d-flex flex-column">
      <div class="pane-head" style="margin-top:1px"><span class="pane-x">✕</span></div>
      <div class="set-title">显示设置</div>
      <div class="set-tabs d-flex"><div class="set-tab on">图元显示</div><div class="set-tab">楼层显示</div></div>
      <div class="set-box">
        <table class="table table-bordered set-tb">
          <colgroup><col style="width:9px"><col style="width:109px"><col style="width:64px"><col style="width:63px"></colgroup>
          <thead><tr><th colspan="2">图层构件</th><th class="live">显示图元</th><th>显示名称</th></tr></thead>
          <tbody id="layerRows"></tbody>
        </table>
        <div class="sbar-up"></div><div class="sbar"></div><div class="sbar-dn"></div>
      </div>
      <button class="btn reset-btn" type="button">恢复默认设置</button>
    </div>
  </div>

  <!-- status -->
  <div class="status-row">
    <span class="st coord" style="left:2px">X = 709797 Y = 367737</span>
    <span class="st" style="left:205px">层高:&nbsp; 3.5</span>
    <span class="st" style="left:288px">标高: 0~3.5</span>
    <span class="st" style="left:421px">0</span>
    <span class="st" style="left:525px">隐藏:&nbsp; 0</span>
    <div class="st-btn" style="left:604px;width:25px"><svg width="15" height="15" viewBox="0 0 15 15" fill="none" stroke="#333"><path d="M3 1v11h11M7 12V8"/></svg></div>
    <div class="st-btn on" style="left:632px;width:36px"><svg width="14" height="18" viewBox="0 0 14 18" fill="none"><path d="M1 4h12v13H1z" stroke="#4a90e2"/><rect x="0" y="0" width="5" height="5" fill="#f2a33a"/></svg><svg width="5" height="3" viewBox="0 0 6 4"><path d="M0 0h6L3 4z" fill="#444"/></svg></div>
    <div class="st-btn" style="left:671px;width:24px"><svg width="15" height="17" viewBox="0 0 15 17" fill="none" stroke="#333"><path d="M2 1l11 15M13 1L2 16"/></svg></div>
    <div class="st-btn" style="left:699px;width:36px"><svg width="16" height="15" viewBox="0 0 16 15" fill="none" stroke="#333"><path d="M1 13h14M2 13L12 2M8 8l2 5"/></svg><svg width="5" height="3" viewBox="0 0 6 4"><path d="M0 0h6L3 4z" fill="#777"/></svg></div>
    <div class="st-btn" style="left:738px;width:36px"><svg width="16" height="15" viewBox="0 0 16 15" fill="none" stroke="#333"><path d="M1 5h6M4 2v6"/><rect x="6" y="9" width="9" height="5" fill="#333"/></svg><svg width="5" height="3" viewBox="0 0 6 4"><path d="M0 0h6L3 4z" fill="#777"/></svg></div>
    <div class="st-btn on" style="left:777px;width:73px;color:#222">跨图层选择</div>
    <div class="st-btn" style="left:853px;width:61px">折线选择</div>
    <span class="st" style="left:917px;color:#333">指定第一点</span>
    <span class="st" style="left:1839px">333.333 FPS</span>
  </div>
  <div class="task-row"><div class="task-cell"></div><div class="task-time">16:12</div></div>
  <div class="vol-meter"></div>
</div>

<script>
// rows of the display settings grid: name, level, show state
const layerRows = [
  ["构造柱",1,"y"],["砌体柱",2,""],["墙",0,"p"],["剪力墙",1,"y"],["人防门框墙",1,"y"],["砌体墙",1,"y"],["砌体加筋",1,""],
  ["保温墙",1,""],["暗梁",1,""],["墙垛",1,""],["幕墙",2,""],["门窗洞",0,""],["门",1,""],["窗",1,""],["门联窗",1,""],
  ["墙洞",1,""],["带形窗",1,""],["带形洞",1,""],["飘窗",1,""],["老虎窗",1,""],["过梁",1,""],["壁龛",2,""],["梁",0,"y"],
  ["梁",1,"y"],["连梁",1,"y"],["圈梁",2,"y"],["板",0,"p"],["现浇板",1,"y"],["螺旋板",1,""],["柱帽",1,""],["板洞",1,""],
  ["板受力筋",1,"y"],["板负筋",1,"y"],["楼层板带",2,""]
];
document.getElementById("layerRows").innerHTML = layerRows.map(r => {
  const cls = r[1] === 0 ? "nm grp" : (r[1] === 2 ? "nm leaf end" : "nm leaf");
  const box = r[1] === 0 ? '<span class="minus-box"></span>' : "";
  const state = r[2] === "y" ? "chk yes" : (r[2] === "p" ? "chk part" : "chk");
  const pick = r[0] === "板受力筋" ? ' class="pick"' : "";
  return `<tr><td></td><td class="${cls}">${box}${r[0]}</td><td${pick}><span class="${state}"></span></td><td><span class="chk"></span></td></tr>`;
}).join("");
</script>
<script src="https://cdn.jsdelivr.net/npm/bootstrap@5.3.0/dist/js/bootstrap.bundle.min.js"></script>
</body>
</html>
